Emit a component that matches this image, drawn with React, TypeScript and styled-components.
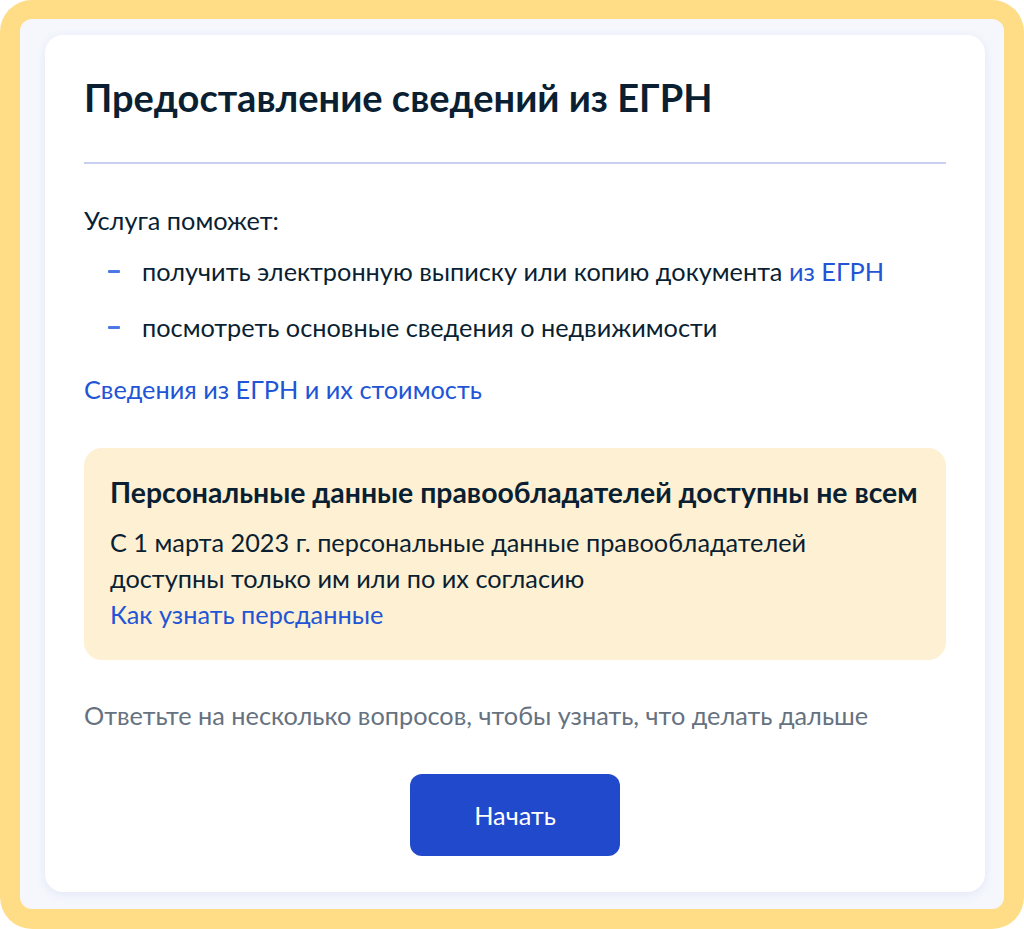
import React from 'react';
import styled, { createGlobalStyle } from 'styled-components';

const GlobalStyle = createGlobalStyle`
  html, body {
    margin: 0;
    padding: 0;
    background: #ffffff;
  }
  body {
    font-family: Lato, "Noto Sans", "Liberation Sans", sans-serif;
    color: #0B1F33;
  }
`;

const Frame = styled.div`
  width: 1024px;
  height: 929px;
  box-sizing: border-box;
  background: #FFDD87;
  border-radius: 32px;
  padding: 19px 20px 20px 20px;
`;

const Backdrop = styled.div`
  height: 100%;
  box-sizing: border-box;
  background: #F5F7FD;
  border-radius: 12px;
  padding: 16px 19px 17px 25px;
`;

const Card = styled.div`
  height: 100%;
  box-sizing: border-box;
  background: #ffffff;
  border-radius: 18px;
  box-shadow: 0 2px 10px rgba(100, 120, 200, 0.12);
  padding: 37px 39px 0 39px;
  display: flex;
  flex-direction: column;
`;

const Title = styled.h1`
  margin: 0;
  font-size: 38px;
  line-height: 50px;
  font-weight: 700;
  color: #0B1F33;
`;

const Divider = styled.hr`
  margin: 40px 0 0;
  border: none;
  height: 2px;
  background: #C8CFF1;
`;

const Text = styled.p<{ $muted?: boolean }>`
  margin: 0;
  font-size: 25.3px;
  line-height: 38px;
  color: ${p => (p.$muted ? '#66727F' : '#0B1F33')};
`;

const Lead = styled(Text)`
  margin-top: 37px;
`;

const List = styled.ul`
  list-style: none;
  margin: 13px 0 0;
  padding: 0 0 0 24px;
  display: flex;
  flex-direction: column;
  gap: 18px;
`;

const Item = styled.li`
  display: flex;
  align-items: center;
  gap: 22px;
  font-size: 25.3px;
  line-height: 38px;
`;

const Dash = styled.span`
  width: 12px;
  height: 3px;
  border-radius: 1px;
  background: #4C77E6;
  flex-shrink: 0;
`;

const Link = styled.a<{ $block?: boolean }>`
  color: #2155D6;
  text-decoration: none;
  cursor: pointer;
  ${p => p.$block && 'display: block; font-size: 25.3px; line-height: 38px;'}
`;

const ServiceLink = styled(Link)`
  margin-top: 24px;
`;

const Notice = styled.div`
  margin-top: 40px;
  background: #FEF0D2;
  border-radius: 18px;
  padding: 25px 26px 28px;
  display: flex;
  flex-direction: column;
`;

const NoticeTitle = styled.h3`
  margin: 0 0 13px;
  font-size: 28.4px;
  line-height: 38px;
  font-weight: 700;
  color: #0B1F33;
`;

const NoticeText = styled(Text)`
  line-height: 36px;
`;

const NoticeLink = styled(Link)`
  line-height: 36px;
`;

const Hint = styled(Text)`
  margin-top: 36px;
`;

const Actions = styled.div`
  display: flex;
  justify-content: center;
  margin-top: 40px;
`;

const StartButton = styled.button`
  width: 210px;
  height: 82px;
  border: none;
  border-radius: 12px;
  background: #2149CB;
  color: #ffffff;
  font-family: inherit;
  font-size: 25.3px;
  cursor: pointer;
`;

const App: React.FC = () => {
  return (
    <>
      <GlobalStyle />
      <Frame>
        <Backdrop>
          <Card>
            <Title>Предоставление сведений из ЕГРН</Title>
            <Divider />
            <Lead>Услуга поможет:</Lead>
            <List>
              <Item>
                <Dash />
                <span>
                  получить электронную выписку или копию документа <Link>из ЕГРН</Link>
                </span>
              </Item>
              <Item>
                <Dash />
                <span>посмотреть основные сведения о недвижимости</span>
              </Item>
            </List>
            <ServiceLink $block>Сведения из ЕГРН и их стоимость</ServiceLink>
            <Notice>
              <NoticeTitle>Персональные данные правообладателей доступны не всем</NoticeTitle>
              <NoticeText>
                С 1 марта 2023 г. персональные данные правообладателей
                <br />
                доступны только им или по их согласию
              </NoticeText>
              <NoticeLink $block>Как узнать персданные</NoticeLink>
            </Notice>
            <Hint $muted>Ответьте на несколько вопросов, чтобы узнать, что делать дальше</Hint>
            <Actions>
              <StartButton>Начать</StartButton>
            </Actions>
          </Card>
        </Backdrop>
      </Frame>
    </>
  );
};

export default App;
